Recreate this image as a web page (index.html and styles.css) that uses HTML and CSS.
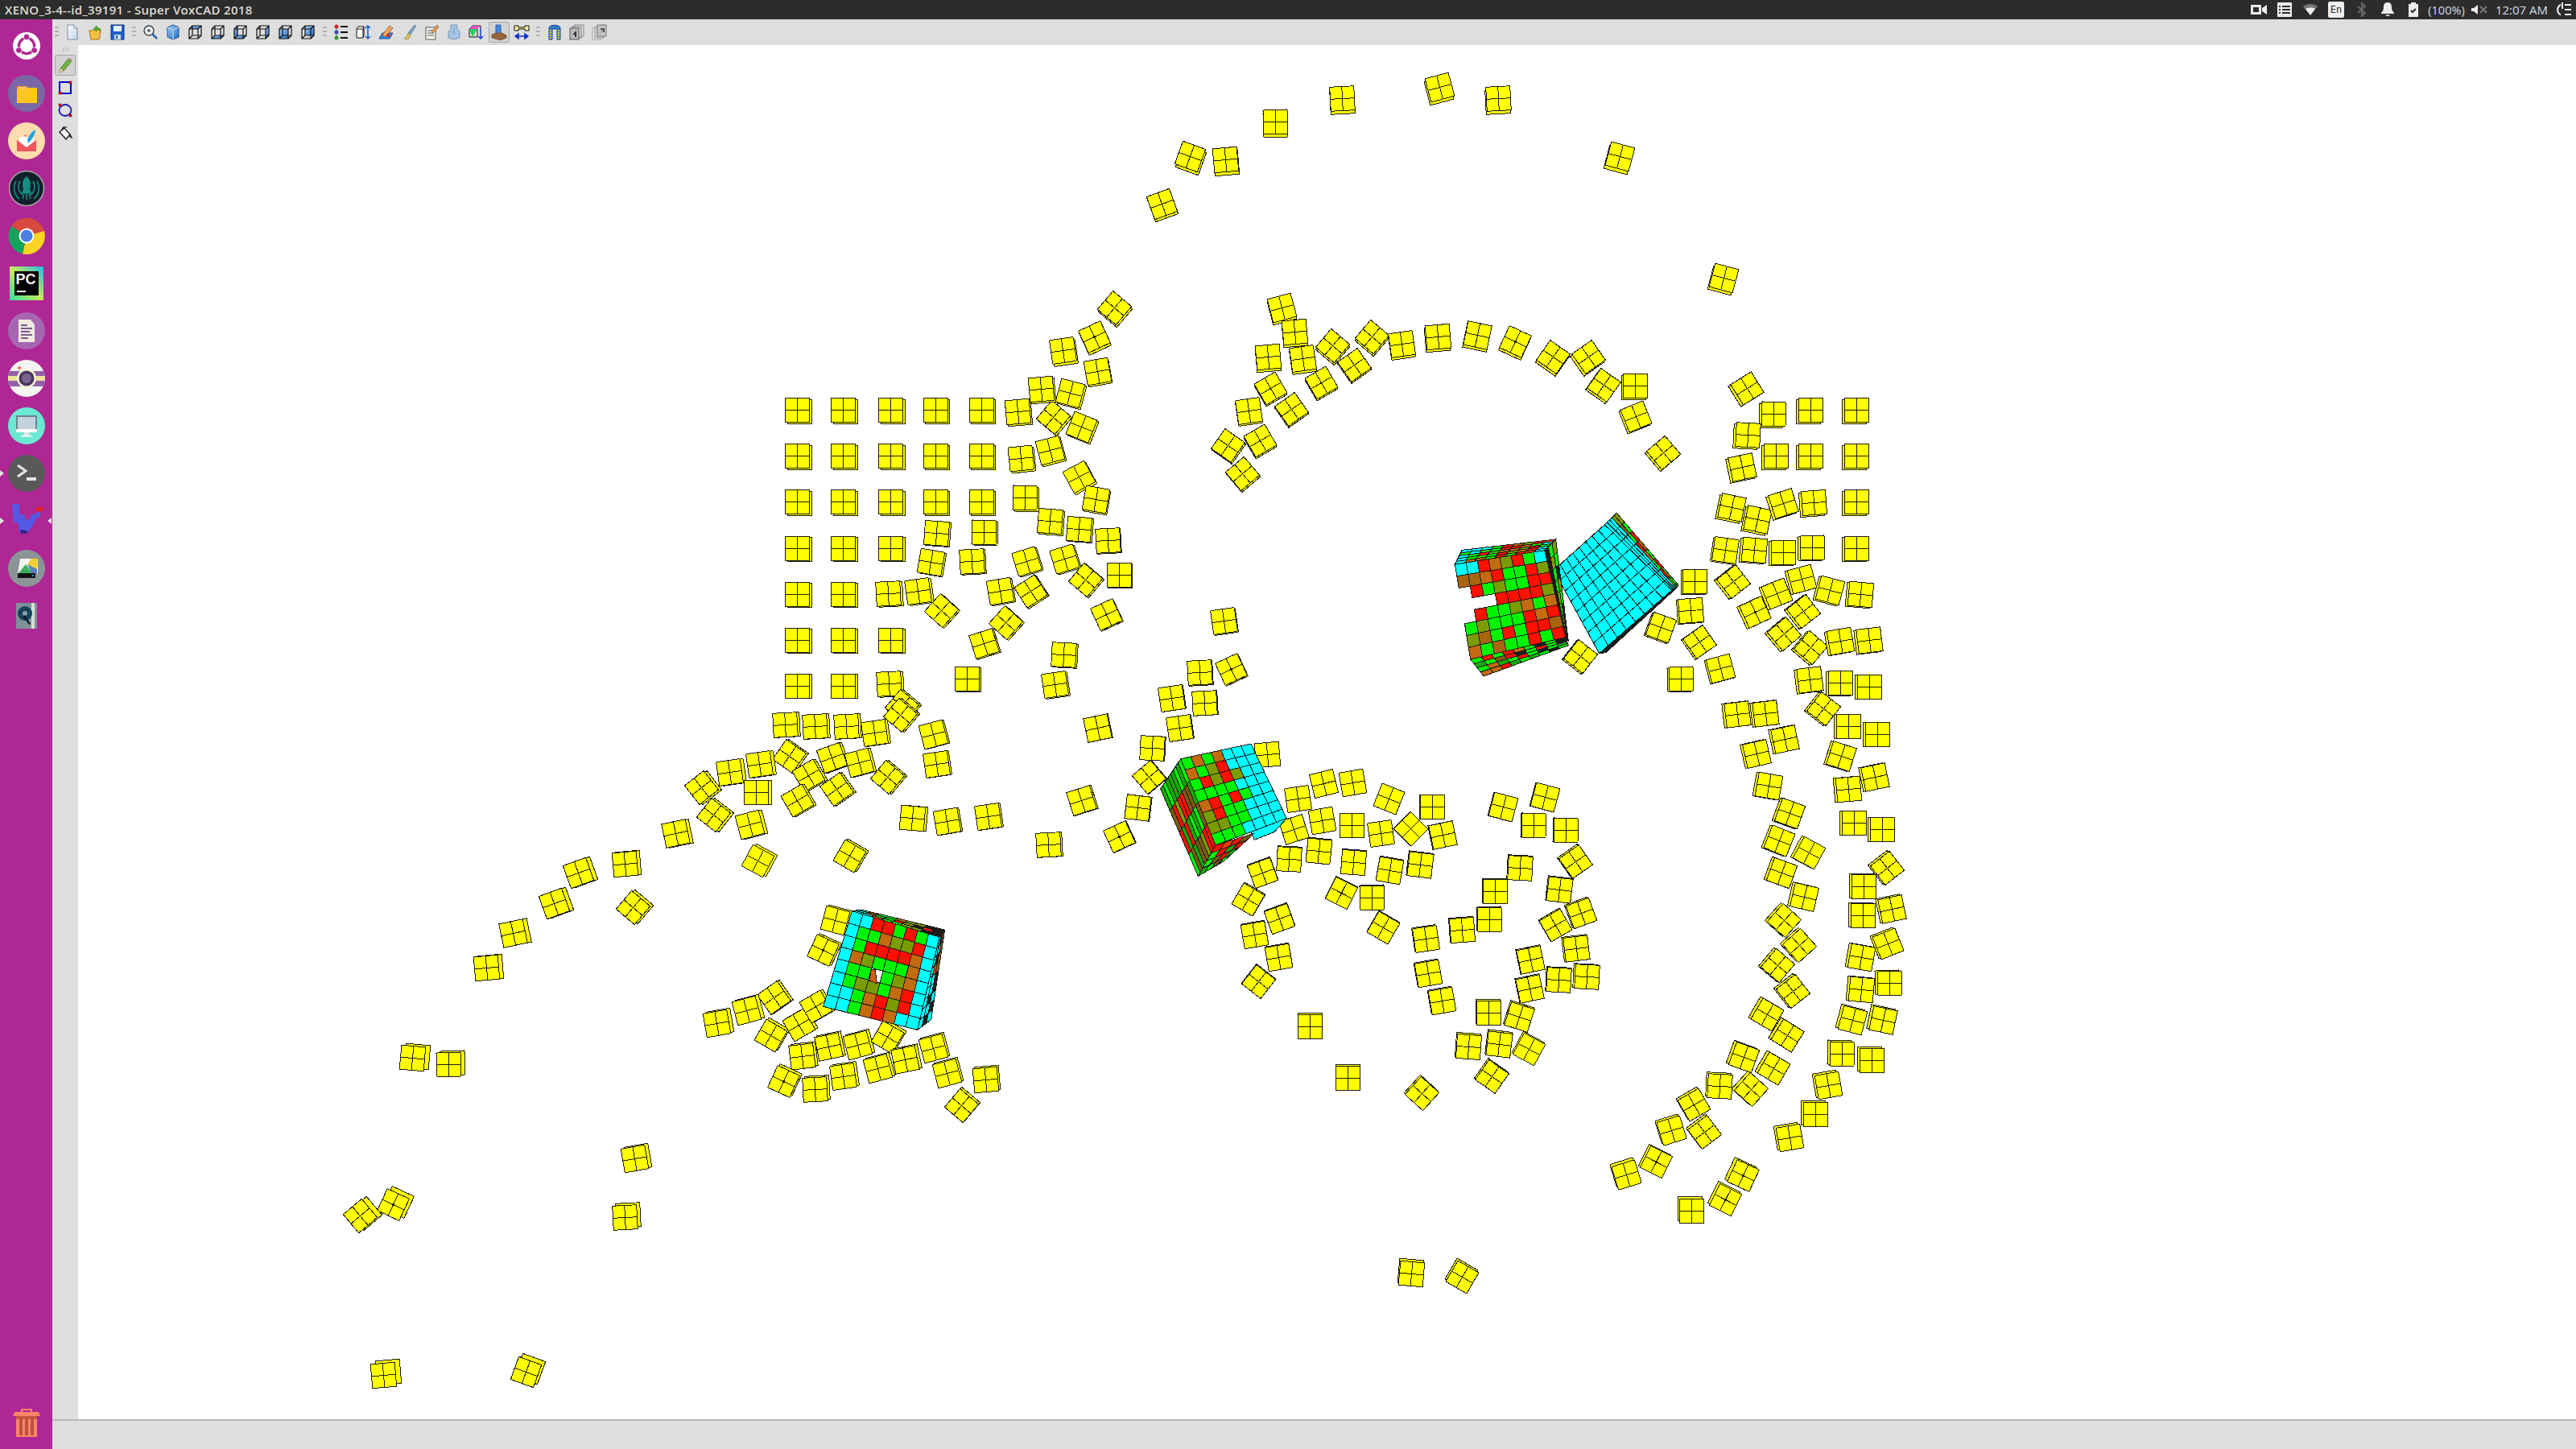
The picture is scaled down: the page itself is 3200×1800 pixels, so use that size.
FILE: index.html
```html
<!DOCTYPE html>
<html lang="en">
<head>
    <meta charset="UTF-8">
    <title>XENO_3-4--id_39191 - Super VoxCAD 2018</title>
    <link rel="stylesheet" href="styles.css">
</head>
<body>
    <!-- shared gradients and toolbar cube -->
    <svg class="defs">
        <defs>
            <linearGradient id="blue" x1="0" y1="0" x2="1" y2="1"><stop offset="0" stop-color="#a8d0f4"/><stop offset="1" stop-color="#1f6cc4"/></linearGradient>
            <linearGradient id="paper" x1="0" y1="0" x2="1" y2="1"><stop offset="0" stop-color="#ffffff"/><stop offset="1" stop-color="#c4d2e4"/></linearGradient>
            <g id="wire" fill="none" stroke="#111" stroke-width="1.2"><path d="M2 6h11v12H2zM6 2h11v12H6zM2 6l4-4M13 6l4-4M13 18l4-4M2 18l4-4"/></g>
            <g id="tile"><rect x="-15" y="-15" width="30" height="30" class="vox"/><path d="M0-15V15M-15 0H15" class="vox-line"/></g>
        </defs>
    </svg>

    <header class="panel">
        <div class="panel-title">XENO_3-4--id_39191 - Super VoxCAD 2018</div>
        <div class="tray">
            <span class="tray-item"><svg width="20" height="16" viewBox="0 0 20 16"><path d="M0 2h13v12H0zM14 6l6-4v12l-6-4z" fill="#eee"/><rect x="3" y="5" width="7" height="6" fill="#2c2c2c"/></svg></span>
            <span class="tray-item"><svg width="18" height="18" viewBox="0 0 18 18"><rect width="18" height="18" rx="1" fill="#eee"/><path d="M2 4h2v2H2zM6 4h10v2H6zM2 8h2v2H2zM6 8h10v2H6zM2 12h2v2H2zM6 12h10v2H6z" fill="#2c2c2c"/></svg></span>
            <span class="tray-item"><svg width="18" height="14" viewBox="0 0 18 14"><path d="M0 3C5-1 13-1 18 3L9 14z" fill="#777"/><path d="M3 6C6 4 12 4 15 6L9 14z" fill="#eee"/></svg></span>
            <span class="tray-item"><span class="lang">En</span></span>
            <span class="tray-item"><svg width="12" height="18" viewBox="0 0 12 18"><path d="M1 5l9 8-4 4V1l4 4-9 8" fill="none" stroke="#666" stroke-width="2"/></svg></span>
            <span class="tray-item"><svg width="16" height="18" viewBox="0 0 16 18"><path d="M8 0c4 0 5 3 5 6s1 5 3 7v1H0v-1c2-2 3-4 3-7s1-6 5-6zM5 15.500h6c-1 2-5 2-6 0z" fill="#eee"/></svg></span>
            <span class="tray-item"><svg width="12" height="18" viewBox="0 0 12 18"><path d="M3 0h6v2h3v16H0V2h3z" fill="#eee"/><path d="M3 10l2 2 4-4" fill="none" stroke="#2c2c2c" stroke-width="2"/></svg></span>
            <span class="tray-text tray-battery">(100%)</span>
            <span class="tray-item"><svg width="20" height="12" viewBox="0 0 20 12"><path d="M0 4h3l5-4v12l-5-4H0z" fill="#eee"/><path d="M11 2l8 8M19 2l-8 8" stroke="#777" stroke-width="2"/></svg></span>
            <span class="tray-text tray-clock">12:07 AM</span>
            <span class="tray-item tray-last"><svg width="18" height="18" viewBox="0 0 18 18"><path d="M5 3a7 7 0 0 0 0 12.500M7 0v8" fill="none" stroke="#eee" stroke-width="2"/><path d="M10 2h8v2h-8zM10 8h8v2h-8zM10 14h8v2h-8z" fill="#eee"/></svg></span>
        </div>
    </header>

    <div class="desktop">
        <nav class="launcher">
            <div class="launcher-item">
                <svg width="34" height="34" viewBox="0 0 46 46"><circle cx="23" cy="23" r="23" fill="#fff"/><circle cx="23" cy="23" r="13" fill="none" stroke="#ae2794" stroke-width="4.500"/><circle cx="23" cy="8" r="5.500" fill="#fff"/><circle cx="23" cy="8" r="4.500" fill="#ae2794"/><circle cx="10" cy="30.500" r="5.500" fill="#fff"/><circle cx="10" cy="30.500" r="4.500" fill="#ae2794"/><circle cx="36" cy="30.500" r="5.500" fill="#fff"/><circle cx="36" cy="30.500" r="4.500" fill="#ae2794"/></svg>
            </div>
            <div class="launcher-item">
                <svg width="46" height="46" viewBox="0 0 46 46"><circle cx="23" cy="23" r="23" fill="#7a68a6"/><path d="M11 14h12l2 2h11v19H11z" fill="#ffc61f"/><path d="M11 14h12l2 3H11z" fill="#f58f1e"/><rect x="13" y="15.500" width="10" height="1" fill="#fff"/></svg>
            </div>
            <div class="launcher-item">
                <svg width="46" height="46" viewBox="0 0 46 46"><circle cx="23" cy="23" r="23" fill="#fddcae"/><path d="M14 18h18v9l-9 6-9-6z" fill="#fff"/><path d="M11 22l12 9 12-9v14H11z" fill="#f2555e"/><path d="M34 9c0 7-5 13-9 17l-1-5c2-5 6-10 10-12z" fill="#2aa4dc"/><path d="M20 16l2-1 1 4z" fill="#f2555e"/></svg>
            </div>
            <div class="launcher-item">
                <svg width="46" height="46" viewBox="0 0 46 46"><circle cx="23" cy="23" r="21.500" fill="#12202a" stroke="#a9a9a9" stroke-width="1.500"/><path d="M23 8c5 4 6 10 4 16l2 5h-12l2-5c-2-6-1-12 4-16z" fill="#148d80"/><path d="M10 14a17 17 0 0 0 4 22M36 14a17 17 0 0 1-4 22M15 14a13 13 0 0 0 3 17M31 14a13 13 0 0 1-3 17M20 29l-2 7M26 29l2 7M23 29v8" fill="none" stroke="#148d80" stroke-width="1.600"/></svg>
            </div>
            <div class="launcher-item">
                <svg width="46" height="46" viewBox="0 0 46 46"><path d="M23 23L4 11A23 23 0 0 1 45 17Z" fill="#d8493f"/><path d="M23 23L45 17A23 23 0 0 1 18 45.500Z" fill="#fbd321"/><path d="M23 23L18 45.500A23 23 0 0 1 4 11Z" fill="#14a45c"/><circle cx="23" cy="23" r="9.500" fill="#fff"/><circle cx="23" cy="23" r="7.500" fill="#4c7fe4"/></svg>
            </div>
            <div class="launcher-item">
                <svg width="42" height="42" viewBox="0 0 42 42"><defs><linearGradient id="pcbg" x1="0" y1="1" x2="1" y2="0"><stop offset="0" stop-color="#2fe0a0"/><stop offset=".5" stop-color="#c7e85a"/><stop offset="1" stop-color="#18c0e8"/></linearGradient></defs><rect width="42" height="42" fill="url(#pcbg)"/><rect x="6" y="6" width="30" height="30" fill="#000"/><text x="7.500" y="22" class="pc-text">PC</text><rect x="9" y="30" width="11" height="2" fill="#fff"/></svg>
            </div>
            <div class="launcher-item">
                <svg width="46" height="46" viewBox="0 0 46 46"><circle cx="23" cy="23" r="23" fill="#a766b2"/><path d="M13 9h15l5 6v22H13z" fill="#f0ebe0"/><path d="M16 15h8v2h-8zM16 19h14v2H16zM16 23h11v2H16zM16 27h14v2H16zM16 31h9v2h-9z" fill="#7c5a8e"/></svg>
            </div>
            <div class="launcher-item">
                <svg width="46" height="46" viewBox="0 0 46 46"><clipPath id="camclip"><circle cx="23" cy="23" r="23"/></clipPath><g clip-path="url(#camclip)"><rect width="46" height="46" fill="#f4f4f0"/><rect y="14" width="46" height="7" fill="#9460a8"/><rect y="20" width="46" height="6" fill="#ece29a"/><rect y="26" width="46" height="7" fill="#9460a8"/></g><circle cx="23" cy="23" r="12" fill="#f6f5d8"/><circle cx="23" cy="23" r="9.500" fill="#4d3560"/><circle cx="23" cy="23" r="6" fill="#7d6490"/><circle cx="14" cy="10" r="2" fill="#f06a5c"/></svg>
            </div>
            <div class="launcher-item">
                <svg width="46" height="46" viewBox="0 0 46 46"><circle cx="23" cy="23" r="23" fill="#6ce8d2"/><rect x="10" y="10" width="26" height="20" fill="#6c8494"/><path d="M12 12h22v16H12z" fill="#c4d2dc"/><rect x="10" y="27" width="26" height="4" fill="#fff"/><path d="M20 31h6l1 4h-8z" fill="#dfe6ea"/><rect x="16" y="35" width="14" height="1.500" fill="#fff"/></svg>
            </div>
            <div class="launcher-item launcher-running">
                <svg width="46" height="46" viewBox="0 0 46 46"><circle cx="23" cy="23" r="23" fill="#595959"/><path d="M12 13l10 7-10 7" fill="none" stroke="#e6e6e6" stroke-width="3"/><rect x="23" y="28" width="12" height="4" fill="#e6e6e6"/></svg>
            </div>
            <div class="launcher-item launcher-running launcher-focused">
                <svg width="46" height="46" viewBox="0 0 46 46"><path d="M5 2h9v13h7v6h6l2-6h6v-3h5v7h-5l-5 12-9 8-7-2-2-12h-5z" fill="#5459e4"/><path d="M35 6h8v5h-8z" fill="#e02020"/><path d="M15 34l7 1 3 3-9 1z" fill="#30208a"/></svg>
            </div>
            <div class="launcher-item">
                <svg width="46" height="46" viewBox="0 0 46 46"><circle cx="23" cy="23" r="23" fill="#8b9597"/><path d="M15 11h22v18H12z" fill="#f2f2f2"/><path d="M29 11h8l-1 14-12-7z" fill="#f0d030"/><path d="M13 29l9-11 8 11z" fill="#38b060"/><path d="M24 18l12 6v5h-7z" fill="#5a80c0"/><rect x="12" y="29" width="22" height="6" fill="#141414"/><rect x="30" y="31" width="2" height="2" fill="#18a0d0"/></svg>
            </div>
            <div class="launcher-item">
                <svg width="26" height="32" viewBox="0 0 26 32"><rect width="26" height="32" rx="1" fill="#7d9298"/><rect x="19" width="4" height="32" fill="#d8dcd8"/><circle cx="11" cy="13" r="9" fill="#16425c"/><circle cx="11" cy="13" r="3" fill="#8ba0a8"/><path d="M11 15l7 11-2 1-7-10z" fill="#101820"/></svg>
            </div>
            <div class="launcher-item launcher-trash">
                <svg width="34" height="38" viewBox="0 0 34 38"><path d="M10 6V1h14v5h-2V3H12v3z" fill="#fc8468"/><path d="M2 5h30l2 5H0z" fill="#fc8468"/><path d="M4 10h26v26H4z" fill="#fc8468"/><rect x="4" y="10" width="26" height="4" fill="#c8573f"/><path d="M8 13h4v21H8zM15 13h4v21h-4zM22 13h4v21h-4z" fill="#bb5340"/></svg>
            </div>
        </nav>

        <main class="app">
            <div class="toolbar">
                <span class="grip grip-first"></span>
                <button class="tool"><svg width="20" height="20" viewBox="0 0 20 20"><path d="M4 1h8l4 4v14H4z" fill="url(#paper)" stroke="#7a8ca4"/><path d="M12 1v4h4" fill="#fff" stroke="#7a8ca4"/></svg></button>
                <button class="tool"><svg width="20" height="20" viewBox="0 0 20 20"><path d="M3 8h4l2-2h7l1 3-2 10H5z" fill="#f6c244" stroke="#a87410"/><path d="M8 6l4-4v2c3 0 5 2 5 5-1-2-3-2-5-2v2z" fill="#58b030" stroke="#2d7014" stroke-width=".6"/></svg></button>
                <button class="tool"><svg width="20" height="20" viewBox="0 0 20 20"><rect x="2" y="1" width="16" height="18" fill="#2060c8" stroke="#103080"/><rect x="5" y="2" width="10" height="7" fill="#e8eef8"/><rect x="6" y="13" width="8" height="6" fill="#d8dce4"/><rect x="8" y="14" width="2" height="4" fill="#2060c8"/></svg></button>
                <span class="grip"></span>
                <button class="tool"><svg width="20" height="20" viewBox="0 0 20 20"><circle cx="8" cy="8" r="6" fill="#e8eef4" stroke="#444" stroke-width="1.400"/><circle cx="8" cy="8" r="2" fill="#666"/><path d="M12 12l6 6" stroke="#2860b0" stroke-width="2.500"/></svg></button>
                <button class="tool"><svg width="20" height="20" viewBox="0 0 20 20"><path d="M10 1l7 3v12l-7 3-7-3V4z" fill="url(#blue)" stroke="#1a4e90"/><path d="M10 7v12M3 4l7 3 7-3" fill="none" stroke="#d0e4f8"/></svg></button>
                <button class="tool"><svg width="20" height="20" viewBox="0 0 20 20"><path d="M2 6l4-4h11l-4 4z" fill="url(#blue)"/><use href="#wire"/></svg></button>
                <button class="tool"><svg width="20" height="20" viewBox="0 0 20 20"><path d="M2 18l4-4h11l-4 4z" fill="url(#blue)"/><use href="#wire"/></svg></button>
                <button class="tool"><svg width="20" height="20" viewBox="0 0 20 20"><path d="M2 6l4-4v12l-4 4z" fill="url(#blue)"/><path d="M6 14h11l-4 4H2z" fill="url(#blue)"/><use href="#wire"/></svg></button>
                <button class="tool"><svg width="20" height="20" viewBox="0 0 20 20"><path d="M13 6l4-4v12l-4 4z" fill="url(#blue)"/><use href="#wire"/></svg></button>
                <button class="tool"><svg width="20" height="20" viewBox="0 0 20 20"><path d="M2 6h11v12H2z" fill="url(#blue)"/><use href="#wire"/></svg></button>
                <button class="tool"><svg width="20" height="20" viewBox="0 0 20 20"><path d="M6 2h11v12H6z" fill="url(#blue)"/><use href="#wire"/></svg></button>
                <span class="grip"></span>
                <button class="tool"><svg width="20" height="20" viewBox="0 0 20 20"><circle cx="4" cy="3" r="2.500" fill="#d82020"/><circle cx="4" cy="10" r="2.500" fill="#2040d0"/><circle cx="4" cy="17" r="2.500" fill="#20a030"/><path d="M4 3v14" stroke="#666"/><path d="M9 3h9M9 10h9M9 17h9" stroke="#111" stroke-width="2"/></svg></button>
                <button class="tool"><svg width="20" height="20" viewBox="0 0 20 20"><path d="M1 6h8v11H1zM1 6l2-3h7L9 6M9 17l1-3V3" fill="#fff" stroke="#111"/><path d="M15 3v14M12 5l3-3 3 3M12 15l3 3 3-3" fill="none" stroke="#1060d0" stroke-width="1.500"/></svg></button>
                <button class="tool"><svg width="20" height="20" viewBox="0 0 20 20"><path d="M1 18l4-7h13l-4 7z" fill="#3c88d8" stroke="#174a90"/><path d="M5 13L14 2l4 3-9 11z" fill="#f0a860" stroke="#803808" stroke-dasharray="2 1"/><circle cx="12" cy="14" r="2" fill="#c82040"/></svg></button>
                <button class="tool"><svg width="20" height="20" viewBox="0 0 20 20"><path d="M17 1l2 1-7 11-3-2z" fill="#7aa0c8" stroke="#506880" stroke-width=".6"/><path d="M9 11l3 2-3 6-5-1c3-2 4-4 5-7z" fill="#d8c060" stroke="#807020" stroke-width=".6"/></svg></button>
                <button class="tool"><svg width="20" height="20" viewBox="0 0 20 20"><rect x="3" y="4" width="12" height="15" fill="#f4f4f0" stroke="#555"/><path d="M5 8h8M5 11h8M5 14h8" stroke="#555"/><path d="M10 9l7-8 2 3-7 7z" fill="#e8a060" stroke="#804010" stroke-width=".6"/></svg></button>
                <button class="tool"><svg width="20" height="20" viewBox="0 0 20 20"><path d="M6 1h8v6l3 2v8l-7 2-7-2V9l3-2z" fill="#a8c4e4" stroke="#7898c0"/><path d="M10 4v9" stroke="#7898c0"/></svg></button>
                <button class="tool"><svg width="20" height="20" viewBox="0 0 20 20"><path d="M1 6h10v10H1z" fill="none" stroke="#111"/><path d="M1 6l4-4h10v3" fill="none" stroke="#111"/><path d="M1 6h10L5 16z" fill="#20d060"/><path d="M5 2h10l-4 4H1z" fill="#e850c0"/><path d="M15 5v13M12 15l3 3 3-3" fill="none" stroke="#1040d0" stroke-width="1.500"/></svg></button>
                <button class="tool tool-checked"><svg width="20" height="20" viewBox="0 0 20 20"><path d="M6 1h6v11H6z" fill="#4888d8" stroke="#2860a8"/><path d="M1 13l5-2h8l5 3v3l-7 3-11-3z" fill="#94663a" stroke="#603c18" stroke-width=".6"/></svg></button>
                <button class="tool"><svg width="20" height="20" viewBox="0 0 20 20"><path d="M1 2h5v2h8V2h5v6h-5V6H6v2H1z" fill="#f8f0a0" stroke="#111"/><path d="M2 15h16M2 15l4-3v6zM18 15l-4-3v6z" fill="#1030d0" stroke="#1030d0" stroke-width="1.500"/></svg></button>
                <span class="grip"></span>
                <button class="tool"><svg width="20" height="20" viewBox="0 0 20 20"><path d="M3 19V5c0-5 14-5 14 0v14h-4V6H7v13z" fill="#3078c8" stroke="#184888"/><path d="M5 7v12M15 7v12" stroke="#e8c828" stroke-width="2.500" stroke-dasharray="2 1"/></svg></button>
                <button class="tool"><svg width="20" height="20" viewBox="0 0 20 20"><rect x="7" y="1" width="11" height="14" fill="#e4e4e4" stroke="#888"/><rect x="4" y="3" width="11" height="14" fill="#d8d8d8" stroke="#777"/><rect x="1" y="5" width="11" height="14" fill="#bbb" stroke="#555"/><path d="M9 8L4 13h3v3h2z" fill="#333"/></svg></button>
                <button class="tool"><svg width="20" height="20" viewBox="0 0 20 20"><rect x="1" y="5" width="11" height="14" fill="#e0e0e0" stroke="#aaa"/><rect x="4" y="3" width="11" height="14" fill="#d0d0d0" stroke="#999"/><rect x="7" y="1" width="11" height="14" fill="#c4c4c4" stroke="#777"/><path d="M9 12l5-5h-3V5h5v5h-2V8z" fill="#555"/></svg></button>
            </div>

            <div class="workspace">
                <div class="sidebar">
                    <span class="grip-side"></span>
                    <button class="tool tool-side tool-checked"><svg width="20" height="20" viewBox="0 0 20 20"><path d="M4 14L14 2l4 3L8 17l-5 2z" fill="#70b040" stroke="#3a6a18" stroke-width=".7"/><path d="M14 2l4 3 1-2-3-2z" fill="#d89090"/><path d="M3 19l1-5 4 3z" fill="#e8d0a0"/></svg></button>
                    <button class="tool tool-side"><svg width="18" height="18" viewBox="0 0 18 18"><rect x="2" y="2" width="14" height="14" fill="none" stroke="#0000c8" stroke-width="2"/><rect x="1" y="14" width="3" height="3" fill="#f00" stroke="#600" stroke-width=".5"/><rect x="14" y="1" width="3" height="3" fill="#f00" stroke="#600" stroke-width=".5"/></svg></button>
                    <button class="tool tool-side"><svg width="18" height="18" viewBox="0 0 18 18"><ellipse cx="9" cy="9" rx="7.500" ry="7" fill="none" stroke="#1818b0" stroke-width="1.800"/><rect x="1" y="1" width="3" height="3" fill="#f00" stroke="#600" stroke-width=".5"/><rect x="14" y="14" width="3" height="3" fill="#f00" stroke="#600" stroke-width=".5"/></svg></button>
                    <button class="tool tool-side"><svg width="18" height="18" viewBox="0 0 18 18"><path d="M2 8l6-5 7 8-5 6z" fill="#f4f4f4" stroke="#111" stroke-width="1.200"/><path d="M5 6c0-4 4-6 6-3M15 11l2 4-2-1z" fill="none" stroke="#111" stroke-width="1.200"/></svg></button>
                </div>
                <div class="canvas">
                    <svg id="scene" class="scene" viewBox="97 56 3103 1707" shape-rendering="crispEdges"></svg>
                </div>
            </div>

            <footer class="statusbar"></footer>
        </main>
    </div>

    <script src="script.js"></script>
</body>
</html>
```

FILE: styles.css
```css
* {
    box-sizing: border-box;
}

html, body {
    margin: 0;
    height: 100%;
    overflow: hidden;
}

body {
    display: flex;
    flex-direction: column;
    font-family: "Open Sans", "Noto Sans", sans-serif;
    background-color: #dedede;
}

.defs {
    position: absolute;
    width: 0;
    height: 0;
}

/* top panel */
.panel {
    flex: none;
    height: 24px;
    display: flex;
    align-items: center;
    justify-content: space-between;
    padding-left: 6px;
    background-color: #2c2c2c;
    color: #dfdbd2;
}

.panel-title {
    font-size: 15px;
    font-weight: 600;
    letter-spacing: 0.3px;
    white-space: nowrap;
}

.tray {
    display: flex;
    align-items: center;
}

.tray-item {
    width: 32px;
    height: 24px;
    display: flex;
    align-items: center;
    justify-content: center;
}

.tray-last {
    width: 31px;
}

.tray-text {
    flex: none;
    text-align: center;
    font-size: 14px;
    color: #d5dde6;
    white-space: nowrap;
}

.tray-battery {
    width: 50px;
    font-size: 14.500px;
}

.tray-clock {
    width: 73px;
    font-size: 15px;
}

.lang {
    width: 20px;
    height: 20px;
    display: flex;
    align-items: center;
    justify-content: center;
    border-radius: 2px;
    background-color: #eee;
    color: #2c2c2c;
    font-family: "DejaVu Sans Mono", monospace;
    font-size: 12px;
}

.desktop {
    flex: 1;
    min-height: 0;
    display: flex;
}

/* launcher */
.launcher {
    flex: none;
    width: 65px;
    display: flex;
    flex-direction: column;
    padding: 3px 0;
    background-color: #ae2794;
}

.launcher-item {
    position: relative;
    flex: none;
    height: 59px;
    display: flex;
    align-items: center;
    justify-content: center;
}

.launcher-trash {
    margin-top: auto;
}

.launcher-running::before {
    content: "";
    position: absolute;
    left: 0;
    top: 26px;
    border-left: 5px solid #e4e4e4;
    border-top: 4px solid transparent;
    border-bottom: 4px solid transparent;
}

.launcher-focused::after {
    content: "";
    position: absolute;
    right: 1px;
    top: 26px;
    border-right: 5px solid #e4e4e4;
    border-top: 4px solid transparent;
    border-bottom: 4px solid transparent;
}

.pc-text {
    font-family: "Liberation Sans", sans-serif;
    font-size: 18px;
    font-weight: 700;
    fill: #fff;
}

/* application window */
.app {
    flex: 1;
    min-width: 0;
    display: flex;
    flex-direction: column;
}

.toolbar {
    flex: none;
    height: 32px;
    display: flex;
    align-items: center;
    background-color: #dedede;
}

.grip {
    flex: none;
    width: 13px;
    height: 14px;
    background: repeating-linear-gradient(to bottom, #b4b4b4 0 2px, transparent 2px 5px) center / 5px 100% no-repeat;
}

.grip-first {
    width: 11px;
}

.tool {
    flex: none;
    width: 28px;
    height: 28px;
    display: flex;
    align-items: center;
    justify-content: center;
    padding: 0;
    border: 1px solid transparent;
    background: none;
}

.tool-checked {
    width: 26px;
    height: 26px;
    margin: 0 1px;
    border-color: #a8a8a8;
    border-radius: 2px;
    background-color: #d2d2d2;
}

.workspace {
    flex: 1;
    min-height: 0;
    display: flex;
}

.sidebar {
    flex: none;
    width: 32px;
    display: flex;
    flex-direction: column;
    align-items: center;
}

.grip-side {
    flex: none;
    width: 14px;
    height: 11px;
    background: repeating-linear-gradient(to right, #b4b4b4 0 1px, transparent 1px 3px) center / 7px 5px no-repeat;
}

.tool-side.tool-checked {
    margin: 1px 0;
}

.canvas {
    flex: 1;
    min-width: 0;
    background-color: #fff;
}

.scene {
    display: block;
    width: 100%;
    height: 100%;
}

.vox {
    fill: #ffff00;
    stroke: #1c1c1c;
    stroke-width: 1;
}

.vox-line {
    fill: none;
    stroke: #1c1c1c;
    stroke-width: 1;
}

.cell {
    stroke: #1c1c1c;
    stroke-width: 1;
}

.statusbar {
    flex: none;
    height: 37px;
    border-top: 2px solid #b9b9b9;
    background-color: #dedede;
}
```

FILE: script.js
```js
// Voxel robots: [centre x, centre y, rotation]
const grid = [990, 1047, 1106, 1162, 1219];
const rows = [[509, 5], [566, 5], [623, 5], [681, 3], [738, 2], [795, 3], [852, 2]];

const tiles = [
    // top arc
    [1788,108,-15],[1667,122,-3],[1861,122,-3],[1584,151,-2],[1478,194,20],[1522,198,-5],[1443,253,-20],[2012,194,15],[2141,345,15],
    [1592,382,-15],[1608,412,-5],[1575,443,-5],[1618,445,-8],[1655,429,40],[1682,453,-35],[1641,475,-30],[1704,418,40],[1741,427,-8],
    [1786,418,-5],[1835,416,12],[1882,424,25],[1929,443,35],[1973,443,-35],[1992,478,35],[2031,479,1],[2032,517,-22],[2066,562,-40],
    [1578,482,-30],[1551,510,-8],[1604,508,-35],[1565,547,-30],[1525,553,35],[1543,588,-40],
    // left block, loose ones
    [1103,737,-3],[1104,849,-3],[1264,511,-5],[1308,518,40],[1343,530,22],[1293,483,-5],[1329,488,15],[1268,569,-6],[1304,559,-15],
    [1340,592,-28],[1361,620,10],[1273,618,2],[1304,647,4],[1340,657,4],[1163,662,4],[1222,661,2],[1156,698,10],[1207,697,-3],
    [1275,697,-17],[1322,694,-17],[1348,720,40],[1140,734,-8],[1242,734,-10],[1280,734,-33],[1169,758,42],[1249,773,42],[1222,799,-18],
    [1321,813,3],[1201,843,0],[1310,850,-8],[1374,763,-25],[1120,877,40],[1384,382,40],[1359,418,-25],[1320,435,-8],[1363,461,-10],
    [1390,714,0],[1376,671,-3],
    // middle
    [1520,771,-8],[1490,835,-3],[1529,831,-25],[1455,867,-8],[1496,873,-3],[1465,904,-8],[1363,904,-12],[1431,929,3],[1343,994,-18],
    [1390,1039,-25],[1302,1049,-3],[1227,1014,-8],[1176,1020,-10],[1133,1016,5],[1055,1063,30],
    [1427,965,-40],[1413,1003,7],[1574,937,-5],[1612,992,-8],[1644,973,-14],[1680,972,-10],[1725,992,22],[1779,1002,0],[1867,1002,15],
    [1919,990,15],[1607,1030,-18],[1642,1019,-10],[1679,1025,1],[1715,1035,-8],[1752,1029,45],[1792,1037,-12],[1905,1025,2],[1945,1031,2],
    [1638,1057,6],[1601,1067,3],[1681,1071,4],[1726,1081,10],[1764,1074,7],[1888,1078,3],[1957,1070,-35],[1568,1084,-20],[1666,1109,27],
    [1704,1115,-2],[1857,1107,0],[1937,1105,7],[1550,1117,30],[1589,1141,-20],[1718,1152,30],[1932,1149,-30],[1964,1134,-20],[1558,1161,-10],
    [1771,1166,-8],[1816,1155,-4],[1850,1142,-2],[1588,1189,-10],[1958,1178,-7],[1901,1192,-12],[1774,1209,-10],[1563,1219,38],[1936,1217,3],
    [1971,1213,3],[1900,1228,-12],[1791,1243,-10],[1849,1258,0],[1887,1263,18],[1627,1275,0],[1824,1300,4],[1862,1297,7],[1899,1303,28],
    [1853,1337,35],[1674,1339,0],[1766,1358,42],[1753,1582,5],[1816,1586,30],
    // right arc, upper
    [2170,482,-32],[2203,514,2],[2249,509,0],[2306,509,0],[2171,540,3],[2206,566,-1],[2249,566,0],[2306,566,0],[2164,580,-12],
    [2151,630,12],[2183,645,12],[2215,625,-18],[2253,624,-4],[2306,623,0],[2143,683,8],[2179,683,5],[2215,686,0],[2251,680,-2],[2306,681,0],
    [2105,722,0],[2153,722,-38],[2238,719,-15],[2207,737,-22],[2273,733,15],[2311,738,5],[2180,760,-25],[2240,759,-38],[2100,758,-4],
    [2063,779,20],[2111,797,-35],[2216,787,-40],[2249,804,40],[2286,796,-10],[2322,795,-7],[2137,830,-15],[2088,843,-2],[2248,844,-7],
    [2286,848,0],[2322,853,0],[2158,887,-7],[2193,886,-7],[2265,880,38],[2296,902,-1],[2332,912,0],[2217,918,-12],[2182,936,-13],[2287,939,18],
    [2329,965,-12],[2296,980,-5],[2197,976,10],[2223,1010,20],[1963,815,38],
    // right arc, lower
    [2210,1044,22],[2247,1059,28],[2213,1084,20],[2241,1114,13],[2303,1022,0],[2338,1030,1],[2344,1078,-38],[2315,1101,1],[2314,1137,1],
    [2350,1129,-12],[2345,1172,-22],[2312,1189,10],[2312,1229,5],[2347,1221,-2],[2216,1143,42],[2235,1174,-42],[2208,1199,40],[2227,1231,-38],
    [2195,1260,30],[2220,1286,32],[2301,1267,15],[2339,1267,12],[2166,1313,20],[2203,1327,30],[2288,1309,2],[2325,1317,1],[2136,1349,3],
    [2175,1353,42],[2271,1348,-10],[2104,1372,-30],[2076,1404,-17],[2117,1406,-37],[2255,1384,0],[2223,1413,-10],[2057,1443,27],[2020,1459,-17],
    [2165,1460,25],[2143,1490,27],[2101,1504,0],
    // left cluster
    [1118,888,40],[1159,912,-15],[975,900,-3],[1012,902,-3],[1051,902,-3],[1086,910,-8],[980,939,35],[943,949,-8],[906,959,-8],[1033,941,-20],
    [1067,947,-15],[1004,963,-30],[1163,949,-8],[1102,965,40],[1039,980,-35],[871,978,-38],[990,994,-30],[939,984,0],[886,1012,38],[931,1024,-15],
    [839,1035,-12],[941,1069,28],[718,1084,-20],[776,1073,-5],[688,1122,-20],[786,1127,40],[637,1159,-12],[604,1202,-5],[512,1314,5],[557,1322,-2],
    // around the lower robot
    [1037,1143,15],[1022,1180,25],[961,1239,-35],[927,1255,-15],[890,1271,-10],[957,1286,30],[992,1273,-30],[1013,1250,-30],[1029,1300,-12],
    [996,1312,-7],[1065,1298,-15],[1102,1288,30],[1124,1316,-12],[1090,1327,-15],[1159,1302,-15],[973,1343,25],[1047,1337,-8],[1012,1353,-3],
    [1176,1333,-15],[1224,1341,-5],[1194,1373,40],[788,1439,-10],[776,1512,-3],[488,1496,25],[447,1510,-40],[476,1708,-5],[653,1704,20]
];

rows.forEach(([y, n]) => {
    for (let i = 0; i < n; i++) tiles.push([grid[i], y, 0]);
});

const colors = {
    c: '#00ffff', g: '#00f400', a: '#3ccf00', r: '#ff1000', e: '#e83a08',
    o: '#c46a10', b: '#a8650e', l: '#7a9c00', d: '#1c1c1c', f: '#16a800', k: '#7c5a10'
};

function drawTile([x, y, a]) {
    // back face converges on the middle of the view
    const dx = (1650 - x) * 0.005;
    const dy = (950 - y) * 0.005;
    // half pixel so straight lines stay one pixel wide
    return `<g transform="translate(${x + 0.5} ${y + 0.5})">` +
        `<rect x="-15" y="-15" width="30" height="30" class="vox" transform="translate(${Math.round(dx)} ${Math.round(dy)}) rotate(${a})"/>` +
        `<use href="#tile" transform="rotate(${a})"/></g>`;
}

// corners were read off 3x crops of the view
function at(ox, oy, pts) {
    return pts.map(p => [ox + p[0] / 3, oy + p[1] / 3]);
}

function polygon(pts, fill) {
    const s = pts.map(p => p[0].toFixed(1) + ',' + p[1].toFixed(1)).join(' ');
    return `<polygon class="cell" points="${s}" fill="${fill}"/>`;
}

// grid of coloured quads stretched between four corners: tl, tr, br, bl
function face(c, lines) {
    const lerp = (p, q, t) => [p[0] + (q[0] - p[0]) * t, p[1] + (q[1] - p[1]) * t];
    const n = lines.length;
    let out = '';
    lines.forEach((line, j) => {
        const m = line.length;
        for (let i = 0; i < m; i++) {
            if (line[i] === '.') continue;
            const pts = [[i, j], [i + 1, j], [i + 1, j + 1], [i, j + 1]].map(([u, v]) =>
                lerp(lerp(c[0], c[1], u / m), lerp(c[3], c[2], u / m), v / n));
            out += polygon(pts, colors[line[i]]);
        }
    });
    return out;
}

let big = '';

// upper robot, cyan side first
big += face(at(1780, 620, [[640, 95], [890, 340], [620, 575], [450, 265]]),
    Array(8).fill('cccccccc'));
big += face(at(1780, 620, [[685, 52], [915, 320], [890, 340], [640, 95]]),
    ['lgrbgrlg', 'lkgrogrl', 'cccccccc', 'cccccccc', 'cccccccc']);
big += face(at(1780, 620, [[890, 340], [915, 325], [645, 572], [620, 575]]),
    ['cdcdcdcd', 'dgrdgdrd', 'dgdrdggg']);
big += face(at(1780, 620, [[108, 190], [458, 150], [416, 191], [82, 243]]),
    ['cccgrolre', 'gcagrrogc', 'cgrabolrg', 'cgagrlorc', 'cobgrgrec']);
big += face(at(1780, 620, [[82, 243], [416, 191], [495, 515], [140, 597]]),
    ['ccrolrgc', 'bborggrl', '.rglggrr', '...rrrrl', '.rgglogo', 'glgggror', 'lbgrgrrb', 'ogbggrgr']);
big += face(at(1780, 620, [[416, 191], [458, 150], [505, 530], [495, 515]]),
    ['dgl', 'dlg', 'dgd', 'dgl', 'dlg', 'dgd', 'dld', 'dld']);
big += face(at(1780, 620, [[140, 597], [495, 515], [505, 545], [190, 660]]),
    ['grgrogdgd', 'fgkrdgrgd', 'gofgrgdgf', 'oorfgfgdg']);

// middle robot
big += face(at(1420, 900, [[140, 128], [270, 450], [205, 565], [65, 240]]),
    ['gfkr', 'fkgr', 'gkfl', 'frgk', 'frfk', 'flrf', 'grfk', 'fkrg']);
big += polygon(at(1420, 900, [[535, 350], [490, 400], [415, 430], [400, 395]]), colors.c);
big += face(at(1420, 900, [[270, 450], [415, 405], [300, 510], [205, 565]]),
    ['rerk', 'grfr', 'gkrf', 'fgkg']);
big += face(at(1420, 900, [[140, 128], [402, 72], [535, 350], [270, 450]]),
    ['gogoccc', 'oglrccc', 'grlrlcc', 'ggggccc', 'orgrgcc', 'lrggccc', 'llggccc', 'gggcccc']);

// lower robot
big += face(at(1000, 1110, [[210, 60], [520, 135], [501, 162], [175, 65]]),
    ['ckggolldd', 'cbggrldrd', 'ccogglldd']);
big += face(at(1000, 1110, [[501, 162], [520, 140], [470, 470], [419, 508]]),
    ['cdb', 'ccb', 'cdb', 'cbb', 'ccd', 'ccd', 'cdc', 'ccd', 'cdc']);
big += face(at(1000, 1110, [[175, 65], [501, 162], [419, 508], [68, 421]]),
    ['ccrrgrgc', 'cggollrc', 'cgrrrroc', 'colgggoc', 'cgg.gloc', 'cgllgorc', 'ccgorlrc', 'ccgorocc']);
big += polygon(at(1000, 1110, [[247, 284], [262, 284], [268, 335], [240, 325]]), '#d85a10');

document.getElementById('scene').innerHTML = tiles.map(drawTile).join('') + big;
```
